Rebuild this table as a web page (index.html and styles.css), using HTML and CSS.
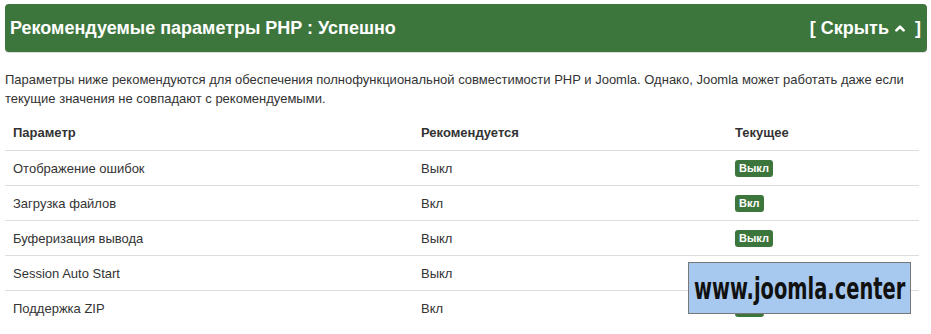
FILE: index.html
```html
<!DOCTYPE html>
<html lang="ru">
<head>
<meta charset="utf-8">
<link rel="stylesheet" href="styles.css">
</head>
<body>
<div class="panel">
  <div class="panel-head">
    <h2 class="panel-title">Рекомендуемые параметры PHP : Успешно</h2>
    <span class="toggle">[ Скрыть<svg class="chev" viewBox="0 0 10 8" width="10" height="8"><path d="M1.4 6.4 L5 2.6 L8.6 6.4" fill="none" stroke="#fff" stroke-width="2.6" stroke-linecap="round" stroke-linejoin="round"/></svg>]</span>
  </div>
  <p class="intro">Параметры ниже рекомендуются для обеспечения полнофункциональной совместимости PHP и Joomla. Однако, Joomla может работать даже если текущие значения не совпадают с рекомендуемыми.</p>
  <table class="grid">
    <thead>
      <tr><th class="c1">Параметр</th><th class="c2">Рекомендуется</th><th class="c3">Текущее</th></tr>
    </thead>
    <tbody>
      <tr><td>Отображение ошибок</td><td>Выкл</td><td><span class="badge">Выкл</span></td></tr>
      <tr><td>Загрузка файлов</td><td>Вкл</td><td><span class="badge">Вкл</span></td></tr>
      <tr><td>Буферизация вывода</td><td>Выкл</td><td><span class="badge">Выкл</span></td></tr>
      <tr><td>Session Auto Start</td><td>Выкл</td><td><span class="badge">Выкл</span></td></tr>
      <tr><td>Поддержка ZIP</td><td>Вкл</td><td><span class="badge">Вкл</span></td></tr>
    </tbody>
  </table>
</div>
<div class="watermark"><span class="wm-text">www.joomla.center</span></div>
</body>
</html>
```
FILE: styles.css
```css
html, body { margin: 0; padding: 0; background: #fff; }
body {
  font-family: "Liberation Sans", Arial, sans-serif;
  font-size: 13px;
  color: #333;
  padding: 4px 4px 0 5px;
  overflow: hidden;
  height: 330px;
}
.panel { width: 922px; }
.panel-head {
  background: #3d763d;
  border-radius: 4px;
  height: 48px;
  display: flex;
  align-items: center;
  justify-content: space-between;
  padding: 0 6px 0 5px;
  box-shadow: 0 1px 0 #ddd;
  color: #fff;
}
.panel-title {
  margin: 0;
  font-size: 18px;
  font-weight: bold;
}
.toggle {
  font-size: 18px;
  font-weight: bold;
  display: flex;
  align-items: center;
  white-space: pre;
}
.chev { margin: 0 10px 0 6px; }
.intro {
  margin: 18px 0 0 0;
  line-height: 19px;
  width: 912px;
}
.grid {
  margin-top: 7px;
  width: 914px;
  border-collapse: collapse;
}
.grid th, .grid td {
  text-align: left;
  padding: 0 8px;
  height: 34px;
  border-bottom: 1px solid #ddd;
  vertical-align: middle;
}
.grid th { font-weight: bold; height: 35px; }
.grid tbody tr:last-child td { border-bottom: none; }
.c1 { width: 392px; }
.c2 { width: 298px; }
.badge {
  display: inline-block;
  background: #3d763d;
  color: #fff;
  font-weight: bold;
  font-size: 11px;
  line-height: 17px;
  padding: 0 4px;
  border-radius: 3px;
}
.watermark {
  position: absolute;
  left: 688px;
  top: 262px;
  width: 223px;
  height: 52px;
  box-sizing: border-box;
  background: #a8c9ef;
  border: 1px solid #777;
  display: flex;
  align-items: center;
  justify-content: center;
  overflow: hidden;
}
.wm-text {
  font-family: "DejaVu Sans Condensed", "DejaVu Sans", sans-serif;
  font-weight: bold;
  font-size: 30px;
  color: #111;
  display: inline-block;
  transform: scaleX(0.72);
  white-space: nowrap;
}
```
